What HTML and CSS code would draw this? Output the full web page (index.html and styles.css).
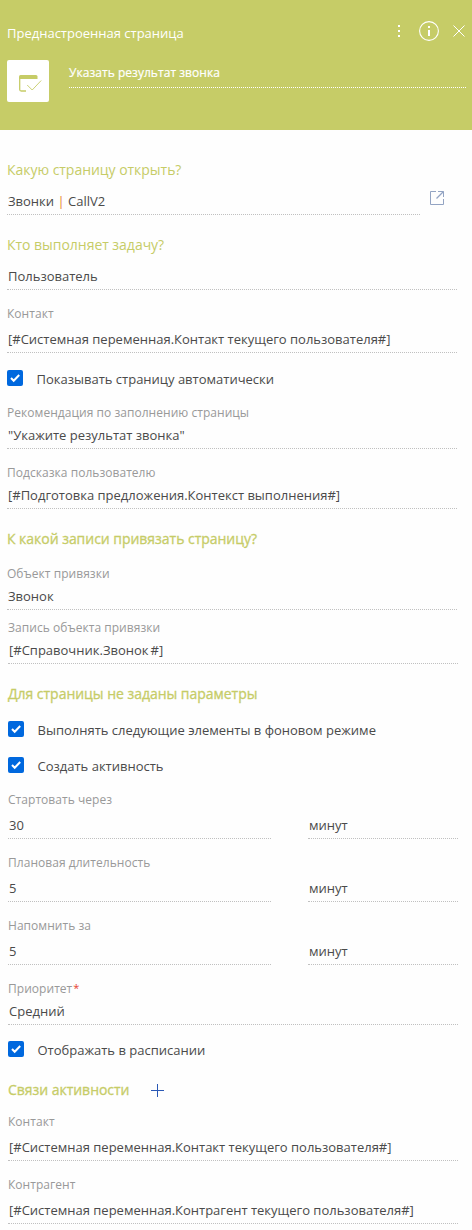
FILE: index.html
```html
<!DOCTYPE html>
<html lang="ru">
<head>
<meta charset="utf-8">
<title>Преднастроенная страница</title>
<link rel="stylesheet" href="styles.css">
</head>
<body>
<header class="header">
  <div class="header-top">
    <h1 class="title">Преднастроенная страница</h1>
    <div class="actions">
      <svg class="icon-more" width="2" height="12" viewBox="0 0 2 12" fill="#fff" shape-rendering="crispEdges"><path d="M0 0h2v2H0zM0 5h2v2H0zM0 10h2v2H0z"/></svg>
      <svg class="icon-info" width="20" height="20" viewBox="0 0 20 20"><circle cx="10" cy="10" r="9.4" fill="none" stroke="#fff" stroke-width="1.1"/><path d="M9 5h2v2H9zM9 9h2v6H9z" fill="#fff"/></svg>
      <svg class="icon-close" width="12" height="12" viewBox="0 0 12 12" fill="none" stroke="#fff" stroke-width="1"><path d="M.5.5l11 11M11.5.5l-11 11"/></svg>
    </div>
  </div>
  <div class="header-main">
    <div class="tile">
      <svg width="42" height="42" viewBox="0 0 42 42"><path d="M12 19v-2.500q0-1.500 1.500-1.500h15.500q1.500 0 1.500 1.500v2.500z" fill="#c6cc67"/><path d="M12.700 18v11.500q0 1.500 1.500 1.500H19" fill="none" stroke="#c6cc67" stroke-width="1.300"/><path d="M20.200 25l5 5 9-9.500" fill="none" stroke="#c6cc67" stroke-width=".9"/></svg>
    </div>
    <div class="caption">Указать результат звонка</div>
  </div>
</header>
<main class="form">
  <section class="group">
    <h2 class="heading">Какую страницу открыть?</h2>
    <div class="page-row">
      <div class="value">Звонки <span class="separator">|</span> CallV2</div>
      <svg class="icon-open" width="14" height="14" viewBox="0 0 14 14" fill="none" stroke="#93a4c3"><path d="M6 .5H.5v13h13V8M8 .5h5.500V6"/><path d="M13.500.5l-7 7" stroke-width="1.200"/></svg>
    </div>
    <h2 class="heading heading-user">Кто выполняет задачу?</h2>
    <div class="value value-user">Пользователь</div>
    <div class="label label-contact">Контакт</div>
    <div class="value spaced">[#Системная переменная.Контакт текущего пользователя#]</div>
    <div class="check check-auto"><span class="box"><svg width="16" height="16" viewBox="0 0 16 16"><path d="M4 8l2.700 2.700L12.200 5" fill="none" stroke="#fff" stroke-width="2"/></svg></span><span class="check-text">Показывать страницу автоматически</span></div>
    <div class="label label-advice">Рекомендация по заполнению страницы</div>
    <div class="value compact">"Укажите результат звонка"</div>
    <div class="label label-hint">Подсказка пользователю</div>
    <div class="value compact">[#Подготовка предложения.Контекст выполнения#]</div>
    <h2 class="heading heading-record strong">К какой записи привязать страницу?</h2>
    <div class="label label-object">Объект привязки</div>
    <div class="value compact">Звонок</div>
  </section>
  <section class="group shifted">
    <div class="label label-record">Запись объекта привязки</div>
    <div class="value compact">[#Справочник.Звонок<span class="hash">#]</span></div>
    <h2 class="heading heading-params strong">Для страницы не заданы параметры</h2>
    <div class="check check-background"><span class="box"><svg width="16" height="16" viewBox="0 0 16 16"><path d="M4 8l2.700 2.700L12.200 5" fill="none" stroke="#fff" stroke-width="2"/></svg></span><span class="check-text">Выполнять следующие элементы в фоновом режиме</span></div>
    <div class="check check-activity"><span class="box"><svg width="16" height="16" viewBox="0 0 16 16"><path d="M4 8l2.700 2.700L12.200 5" fill="none" stroke="#fff" stroke-width="2"/></svg></span><span class="check-text">Создать активность</span></div>
    <div class="label label-start">Стартовать через</div>
    <div class="duration"><div class="value">30</div><div class="value">минут</div></div>
    <div class="label label-time">Плановая длительность</div>
    <div class="duration"><div class="value">5</div><div class="value">минут</div></div>
    <div class="label label-time">Напомнить за</div>
    <div class="duration"><div class="value">5</div><div class="value">минут</div></div>
    <div class="label label-time">Приоритет<span class="required">*</span></div>
    <div class="value compact">Средний</div>
    <div class="check check-schedule"><span class="box"><svg width="16" height="16" viewBox="0 0 16 16"><path d="M4 8l2.700 2.700L12.200 5" fill="none" stroke="#fff" stroke-width="2"/></svg></span><span class="check-text">Отображать в расписании</span></div>
    <div class="links-row">
      <h2 class="heading strong">Связи активности</h2>
      <svg class="icon-plus" width="13" height="13" viewBox="0 0 13 13" stroke="#2a58b5" shape-rendering="crispEdges"><path d="M6.500 0v13M0 6.500h13"/></svg>
    </div>
    <div class="label label-link">Контакт</div>
    <div class="value spaced">[#Системная переменная.Контакт текущего пользователя#]</div>
    <div class="label label-time">Контрагент</div>
    <div class="value spaced">[#Системная переменная.Контрагент текущего пользователя#]</div>
  </section>
</main>
</body>
</html>
```
FILE: styles.css
```css
* { box-sizing: border-box; }
body {
  margin: 0;
  width: 472px;
  height: 1230px;
  overflow: hidden;
  background: #fefefe;
  font-family: "Open Sans", "Noto Sans", sans-serif;
  font-size: 13px;
  line-height: 20px;
  color: #4a4a4a;
}
h1, h2 { margin: 0; font-weight: 400; }
svg { display: block; flex: none; }

.header { height: 130px; padding: 21px 0 0 7px; background: #c6cc67; color: #fff; }
.header-top { display: flex; justify-content: space-between; height: 39px; }
.title { font-size: 13px; line-height: 20px; padding-top: 2px; }
.actions { display: flex; align-items: flex-start; padding-right: 7px; }
.icon-more { margin: 4px 19px 0 0; }
.icon-info { margin-right: 14px; }
.icon-close { margin-top: 4px; }
.header-main { display: flex; gap: 20px; }
.tile { width: 42px; height: 42px; border-radius: 2px; background: #fff; }
.caption { width: 397px; height: 28px; padding-top: 3px; font-size: 12px; letter-spacing: .04px; -webkit-text-stroke: .2px #fff; border-bottom: 1px dotted #fff; }

.form { padding-top: 30px; }
.group { padding-left: 7px; width: 457px; }
.shifted { padding-left: 8px; width: 458px; }
.heading { font-size: 14px; line-height: 20px; letter-spacing: -.03px; color: #c6cc67; white-space: nowrap; }
.strong { -webkit-text-stroke: .3px #c6cc67; }
.value { height: 24px; padding-left: 1px; border-bottom: 1px dotted #c0c0c0; white-space: nowrap; }
.label { height: 18px; font-size: 12px; line-height: 20px; letter-spacing: .04px; color: #999; white-space: nowrap; }
.spaced { margin-top: 7px; }
.compact { margin-top: 4px; }

.page-row { display: flex; align-items: flex-start; gap: 10px; margin-top: 11px; }
.page-row .value { flex: none; width: 413px; }
.separator { color: #e8812c; }
.heading-user { margin-top: 20px; }
.value-user { margin-top: 11px; }
.label-contact { margin-top: 14px; }
.label-advice { margin-top: 14px; }
.label-hint { margin-top: 14px; }
.heading-record { margin-top: 20px; }
.label-object { margin-top: 15px; }
.label-record { margin-top: 8px; }
.hash { margin-left: 2px; }
.heading-params { margin-top: 20px; }
.label-start { margin-top: 14px; }
.label-time { margin-top: 14px; }
.label-link { margin-top: 12px; }

.check { display: flex; gap: 13.5px; height: 19px; }
.box { width: 16px; height: 16px; flex: none; border-radius: 2px; background: #0068de; }
.check-text { line-height: 18px; white-space: nowrap; }
.check-auto { margin-top: 17px; }
.check-background { margin-top: 17px; }
.check-activity { margin-top: 17px; }
.check-schedule { margin-top: 16px; }

.duration { display: grid; grid-template-columns: 263px 150px; gap: 37px; margin-top: 7px; }
.required { margin-left: 1px; font-size: 11px; line-height: 1; vertical-align: 1px; color: #e8432e; }
.links-row { display: flex; gap: 22px; align-items: center; height: 20px; margin-top: 20px; }
```
